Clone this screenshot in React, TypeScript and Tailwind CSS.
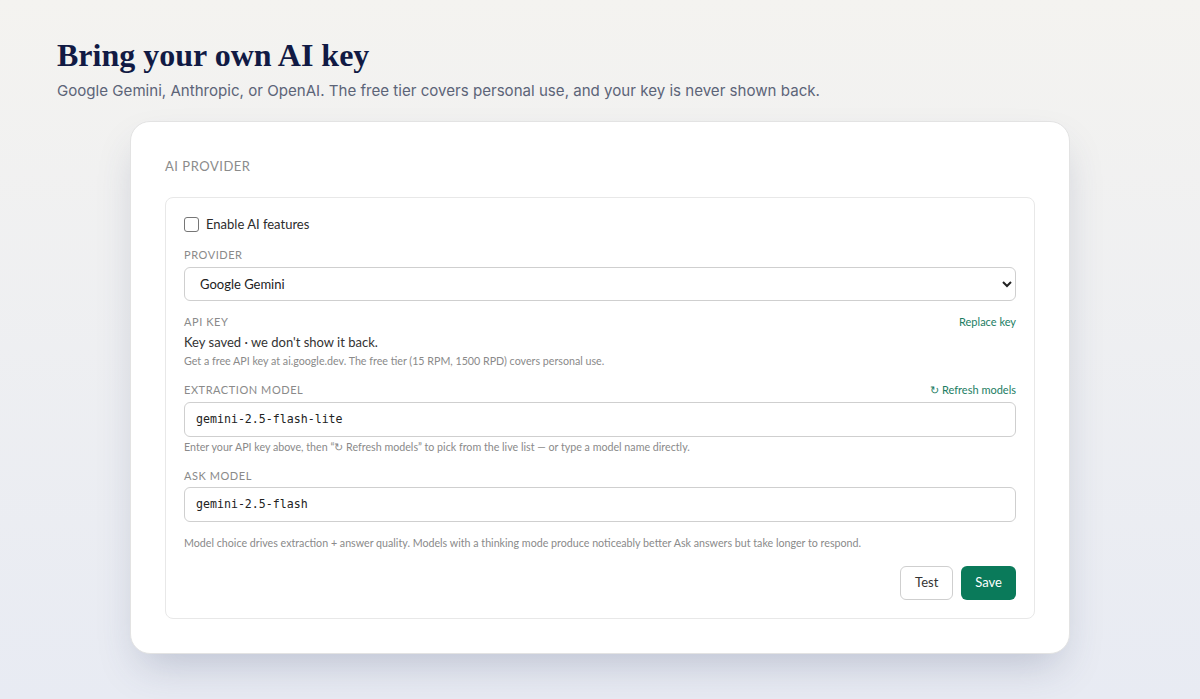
import React from "react";

function Label({ children, right }: { children: React.ReactNode; right?: React.ReactNode }) {
  return (
    <div className="flex items-center justify-between">
      <div className="text-[11px] leading-[14px] tracking-[0.05em] uppercase text-[#8a8a8a]">{children}</div>
      {right}
    </div>
  );
}

export default function App() {
  return (
    <div className="min-h-screen w-full bg-gradient-to-b from-[#f4f3f0] to-[#e8ebf3] font-['Lato','Noto_Sans',sans-serif]">
      <div className="px-[57px] pt-[35px]">
        <h1 className="font-['Liberation_Serif',serif] font-bold text-[32px] leading-[40px] text-[#111a44]">
          Bring your own AI key
        </h1>
        <p className="mt-[5px] font-['Inter',sans-serif] text-[15.1px] leading-[22px] text-[#5c6478]">
          Google Gemini, Anthropic, or OpenAI. The free tier covers personal use, and your key is never shown back.
        </p>
      </div>
      <div className="mx-auto mt-[19px] w-[940px] rounded-[20px] border border-[#e3e3e3] bg-white px-[34px] pt-[36px] pb-[34px] shadow-[0_20px_40px_-10px_rgba(60,70,110,0.25)]">
        <div className="text-[13px] leading-[16px] tracking-[0.04em] uppercase text-[#8b8b8b]">AI Provider</div>
        <div className="mt-[23px] rounded-[8px] border border-[#e8e8e8] px-[18px] pt-[18px] pb-[18px]">
          <label className="flex items-center gap-[7px] text-[13px] leading-[16px] text-[#2c2c2c]">
            <span className="h-[15px] w-[15px] rounded-[3px] border border-[#767676] bg-white" />
            Enable AI features
          </label>
          <div className="mt-[16px]">
            <Label>Provider</Label>
            <select className="mt-[5px] h-[34px] w-full rounded-[6px] border border-[#cfcfcf] bg-white pl-[11px] pr-[8px] text-[13px] text-[#222]">
              <option>Google Gemini</option>
            </select>
          </div>
          <div className="mt-[14px]">
            <Label right={<span className="text-[11px] leading-[14px] text-[#1b7d63]">Replace key</span>}>API Key</Label>
            <div className="mt-[5px] text-[13px] leading-[16px] text-[#333]">Key saved · we don't show it back.</div>
            <div className="mt-[4px] text-[10.7px] leading-[14px] text-[#8a8a8a]">
              Get a free API key at ai.google.dev. The free tier (15 RPM, 1500 RPD) covers personal use.
            </div>
          </div>
          <div className="mt-[15px]">
            <Label right={<span className="text-[11px] leading-[14px] text-[#1b7d63]">↻ Refresh models</span>}>Extraction model</Label>
            <div className="mt-[5px] flex h-[35px] items-center rounded-[6px] border border-[#cfcfcf] px-[11px] font-['DejaVu_Sans_Mono',monospace] text-[11.6px] text-[#222]">
              gemini-2.5-flash-lite
            </div>
            <div className="mt-[3px] text-[10.7px] leading-[14px] text-[#8a8a8a]">
              Enter your API key above, then “↻ Refresh models” to pick from the live list — or type a model name directly.
            </div>
          </div>
          <div className="mt-[15px]">
            <Label>Ask model</Label>
            <div className="mt-[4px] flex h-[35px] items-center rounded-[6px] border border-[#cfcfcf] px-[11px] font-['DejaVu_Sans_Mono',monospace] text-[11.6px] text-[#222]">
              gemini-2.5-flash
            </div>
          </div>
          <div className="mt-[14px] text-[10.7px] leading-[14px] text-[#8a8a8a]">
            Model choice drives extraction + answer quality. Models with a thinking mode produce noticeably better Ask answers but take longer to respond.
          </div>
          <div className="mt-[16px] flex justify-end gap-[8px]">
            <button className="h-[34px] rounded-[6px] border border-[#cfcfcf] bg-white px-[14px] text-[13px] text-[#333]">Test</button>
            <button className="h-[34px] rounded-[6px] bg-[#0a7a5a] px-[14px] text-[13px] text-white">Save</button>
          </div>
        </div>
      </div>
    </div>
  );
}
